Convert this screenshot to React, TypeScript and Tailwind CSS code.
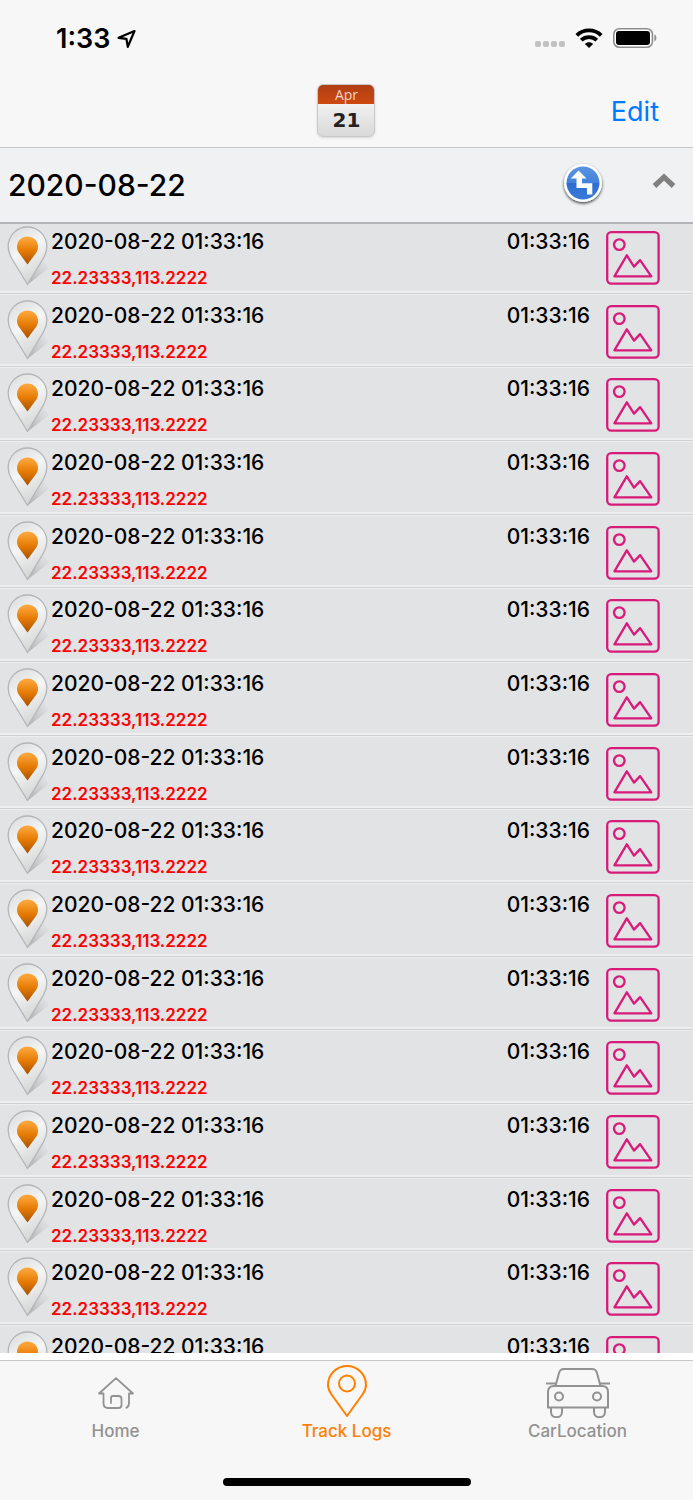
import React from 'react';

interface TrackLog {
  id: number;
  date: string;
  time: string;
  coordinates: string;
}

const logs: TrackLog[] = Array.from({ length: 16 }, (_, id) => ({
  id,
  date: '2020-08-22 01:33:16',
  time: '01:33:16',
  coordinates: '22.23333,113.2222',
}));

const LocationArrow = () => (
  <svg className="w-5 h-5" viewBox="0 0 20 20" fill="none" aria-hidden="true">
    <path
      d="M18.5 2 2.6 8.8 10.4 9.8 11.8 17.8Z"
      stroke="#000"
      strokeWidth="2.2"
      strokeLinejoin="round"
    />
  </svg>
);

const WifiIcon = () => (
  <svg className="w-7 h-5" viewBox="0 0 28 20" aria-hidden="true">
    <g fill="none" stroke="#000" strokeWidth="3.8">
      <path d="M1.8 7.4C8.4 0.8 19.6 0.8 26.2 7.4" />
      <path d="M6.2 12.1C10.6 8.1 17.4 8.1 21.8 12.1" />
    </g>
    <path d="M14 20 9.9 15.9C12.2 13.8 15.8 13.8 18.1 15.9Z" />
  </svg>
);

const BatteryIcon = () => (
  <svg className="w-11 h-5" viewBox="0 0 44 20" aria-hidden="true">
    <rect x="0.8" y="0.8" width="38.6" height="18.4" rx="5.5" fill="#fff" stroke="#8e8e8e" strokeWidth="1.6" />
    <rect x="3" y="3" width="34" height="14" rx="3" />
    <path d="M41.4 6.6C44 7.6 44 12.4 41.4 13.4Z" fill="#8e8e8e" />
  </svg>
);

const DirectionsIcon = () => (
  <svg className="w-11 h-11" viewBox="0 0 44 44" aria-hidden="true">
    <defs>
      <linearGradient id="sign" x1="0" y1="0" x2="0" y2="1">
        <stop offset="0" stopColor="#5a93e2" />
        <stop offset="0.5" stopColor="#4381dc" />
        <stop offset="0.5" stopColor="#2b6dd0" />
        <stop offset="1" stopColor="#3b7ad8" />
      </linearGradient>
      <filter id="signShadow" x="-20%" y="-20%" width="140%" height="150%">
        <feDropShadow dx="0" dy="1.5" stdDeviation="1.5" floodOpacity="0.75" />
      </filter>
    </defs>
    <circle cx="22" cy="20" r="19" fill="#fff" filter="url(#signShadow)" />
    <circle cx="22" cy="20" r="16.5" fill="url(#sign)" />
    <path d="M17.5 7.5 25.5 15.5H21V20.2H31.3V31.5H26V25H15.5V15.5H9.8Z" fill="#fff" />
  </svg>
);

const PinIcon = () => (
  <svg className="w-11 h-16" viewBox="0 0 44 64" aria-hidden="true">
    <defs>
      <linearGradient id="pinBody" x1="0" y1="0" x2="0.4" y2="1">
        <stop offset="0" stopColor="#d9dadb" />
        <stop offset="0.5" stopColor="#f4f5f5" />
        <stop offset="1" stopColor="#d6d6d6" />
      </linearGradient>
      <linearGradient id="pinCore" x1="0" y1="0" x2="0" y2="1">
        <stop offset="0" stopColor="#ffab42" />
        <stop offset="0.5" stopColor="#e67c05" />
        <stop offset="1" stopColor="#a85200" />
      </linearGradient>
      <linearGradient id="pinShade" x1="0" y1="1" x2="1" y2="0">
        <stop offset="0" stopColor="#8f8f8f" stopOpacity="0.7" />
        <stop offset="1" stopColor="#bbb" stopOpacity="0" />
      </linearGradient>
    </defs>
    <path d="M20 60 42 43 36 35Z" fill="url(#pinShade)" />
    <path
      d="M20.5 59.5 4.5 33C2.2 29 1.2 25.5 1.2 21.5C1.2 10.5 10 2 20.5 2C31 2 39.8 10.5 39.8 21.5C39.8 25.5 38.8 29 36.5 33Z"
      fill="url(#pinBody)"
      stroke="#b4b5b6"
      strokeWidth="1.3"
      strokeLinejoin="round"
    />
    <path
      d="M20.5 39.5 12 28C10.6 26 10 24 10 22C10 16 14.5 11.5 20.5 11.5C26.5 11.5 31 16 31 22C31 24 30.4 26 29 28Z"
      fill="url(#pinCore)"
    />
  </svg>
);

const PhotoIcon = () => (
  <svg
    className="w-[54px] h-[54px]"
    viewBox="0 0 54 54"
    fill="none"
    stroke="#d81b7a"
    strokeWidth="2.3"
    strokeLinejoin="round"
    aria-hidden="true"
  >
    <rect x="1.2" y="1.2" width="51.4" height="51.4" rx="4" />
    <circle cx="13.3" cy="13.6" r="5.3" />
    <path d="M8.4 45.3 20.8 24.3 28 35.6 34.1 29.1 45.3 45.3Z" />
  </svg>
);

const HomeIcon = () => (
  <svg
    className="w-9 h-8"
    viewBox="0 0 36 32"
    fill="none"
    stroke="currentColor"
    strokeWidth="1.8"
    strokeLinecap="round"
    strokeLinejoin="round"
    aria-hidden="true"
  >
    <path d="M13 26V21C13 19.5 13.7 19 15 19H20.5C22.5 19 23.5 20 23.5 22V28C23.5 30 22.5 31 20.5 31H10C7 31 5.5 29 5.5 26V16.5H1L18 1.2 35 16.5H31V26C31 28.5 30 30 28.5 30.8" />
  </svg>
);

const TrackIcon = () => (
  <svg
    className="w-10 h-[52px]"
    viewBox="0 0 40 52"
    fill="none"
    stroke="currentColor"
    strokeWidth="2"
    strokeLinejoin="round"
    aria-hidden="true"
  >
    <path d="M20 51 4.5 29.5C2.2 26.2 1 23 1 20C1 9.5 9.5 1 20 1C30.5 1 39 9.5 39 20C39 23 37.8 26.2 35.5 29.5Z" />
    <circle cx="20" cy="18.5" r="8" />
  </svg>
);

const CarIcon = () => (
  <svg
    className="w-16 h-[50px]"
    viewBox="0 0 64 50"
    fill="none"
    stroke="currentColor"
    strokeWidth="2"
    aria-hidden="true"
  >
    <path d="M0 15.5H10M54 15.5H64" />
    <path d="M9.5 18 13 5C13.7 2.2 15.2 1 18 1H46C48.8 1 50.3 2.2 51 5L54.5 18" />
    <path d="M2 39.5V24C2 20 4 18 8 18H56C60 18 62 20 62 24V39.5Z" />
    <circle cx="13" cy="28.5" r="4" />
    <circle cx="51" cy="28.5" r="4" />
    <path d="M5 40V44C5 51 16 51 16 44V40M48 40V44C48 51 59 51 59 44V40" />
  </svg>
);

const StatusBar = () => (
  <div className="h-[76px] flex items-center justify-between pl-14 pr-9">
    <div className="flex items-center gap-1.5 pt-0.5">
      <span className="text-[27px] font-semibold">1:33</span>
      <LocationArrow />
    </div>
    <div className="flex items-center">
      <div className="flex gap-[2px] mr-2.5 mt-3">
        {[0, 1, 2, 3].map((dot) => (
          <span key={dot} className="w-[6px] h-[6px] rounded-[2px] bg-[#c2c2c2]" />
        ))}
      </div>
      <WifiIcon />
      <div className="ml-2.5">
        <BatteryIcon />
      </div>
    </div>
  </div>
);

const CalendarButton = () => (
  <button
    type="button"
    className="w-[58px] h-[53px] flex flex-col rounded-md overflow-hidden border border-[#c9c9c9] shadow-sm bg-linear-to-b from-white to-[#d9d9d9]"
  >
    <span className="h-[19px] w-full bg-linear-to-b from-[#b03e14] to-[#cd4a10] text-[#f3d5c8] text-[14px] leading-[19px] font-['Open_Sans',sans-serif]">
      Apr
    </span>
    <span className="flex-1 w-full text-[#222] text-[20px] leading-8 font-bold font-['DejaVu_Sans',sans-serif]">
      21
    </span>
  </button>
);

const LogRow: React.FC<{ log: TrackLog }> = ({ log }) => (
  <li className="h-[74px] nth-[3n+2]:h-[73px] shrink-0 flex items-start pl-[7px] pr-[33px] bg-[#e2e3e5] border-t border-t-[#eeeeef] border-b border-b-[#cfd0d1] shadow-[inset_0_-2px_0_#eeeeef]">
    <div className="pt-1">
      <PinIcon />
    </div>
    <div className="flex-1 pt-[9px]">
      <p className="text-[21px] leading-6 font-medium">{log.date}</p>
      <p className="text-[17px] leading-5 mt-[14px] font-semibold text-[#ff0000]">{log.coordinates}</p>
    </div>
    <p className="pt-[9px] text-[21px] leading-6 font-medium">{log.time}</p>
    <button type="button" aria-label="Show photo" className="ml-4 mt-2.5">
      <PhotoIcon />
    </button>
  </li>
);

const App = () => {
  return (
    <div className="h-screen flex flex-col overflow-hidden bg-white text-black font-[Inter,sans-serif]">
      <header className="shrink-0 bg-[#f7f7f7] border-b border-[#c4c5c7]">
        <StatusBar />
        <div className="h-[71px] grid grid-cols-3 items-center px-[34px]">
          <div className="col-start-2 justify-self-center pb-[3px]">
            <CalendarButton />
          </div>
          <button type="button" className="justify-self-end pt-0.5 text-[27px] text-[#007aff]">
            Edit
          </button>
        </div>
      </header>

      <section className="flex-1 min-h-0 flex flex-col overflow-hidden mb-[7px]">
        <div className="relative z-10 shrink-0 h-[76px] flex items-center pl-2 pr-[17px] bg-[#f0f1f3] border-b-2 border-[#b3b4b7]">
          <h1 className="flex-1 text-[30px] font-medium">2020-08-22</h1>
          <button type="button" aria-label="Show route">
            <DirectionsIcon />
          </button>
          <button type="button" aria-label="Collapse" className="ml-[47px] pb-2">
            <svg className="w-6 h-4" viewBox="0 0 24 16" fill="none" aria-hidden="true">
              <path d="M2.5 13 12 4 21.5 13" stroke="#808080" strokeWidth="5.2" />
            </svg>
          </button>
        </div>
        <ul className="flex-1 min-h-0 flex flex-col overflow-hidden -mt-1">
          {logs.map((log) => (
            <LogRow key={log.id} log={log} />
          ))}
        </ul>
      </section>

      <footer className="shrink-0 h-[140px] flex flex-col items-center justify-between bg-[#f7f7f7] border-t border-[#c8c8c8] pb-[14px]">
        <nav className="w-full grid grid-cols-3 text-[17px] leading-5 font-medium text-[#929292]">
          <a href="#home" className="flex flex-col items-center">
            <span className="h-[60px] flex items-center pt-1">
              <HomeIcon />
            </span>
            Home
          </a>
          <a href="#logs" className="flex flex-col items-center text-[#ff8000]">
            <span className="h-[60px] flex items-center">
              <TrackIcon />
            </span>
            Track Logs
          </a>
          <a href="#car" className="flex flex-col items-center">
            <span className="h-[60px] flex items-center pt-1">
              <CarIcon />
            </span>
            CarLocation
          </a>
        </nav>
        <div className="w-[248px] h-2 rounded-full bg-black" />
      </footer>
    </div>
  );
};

export default App;
